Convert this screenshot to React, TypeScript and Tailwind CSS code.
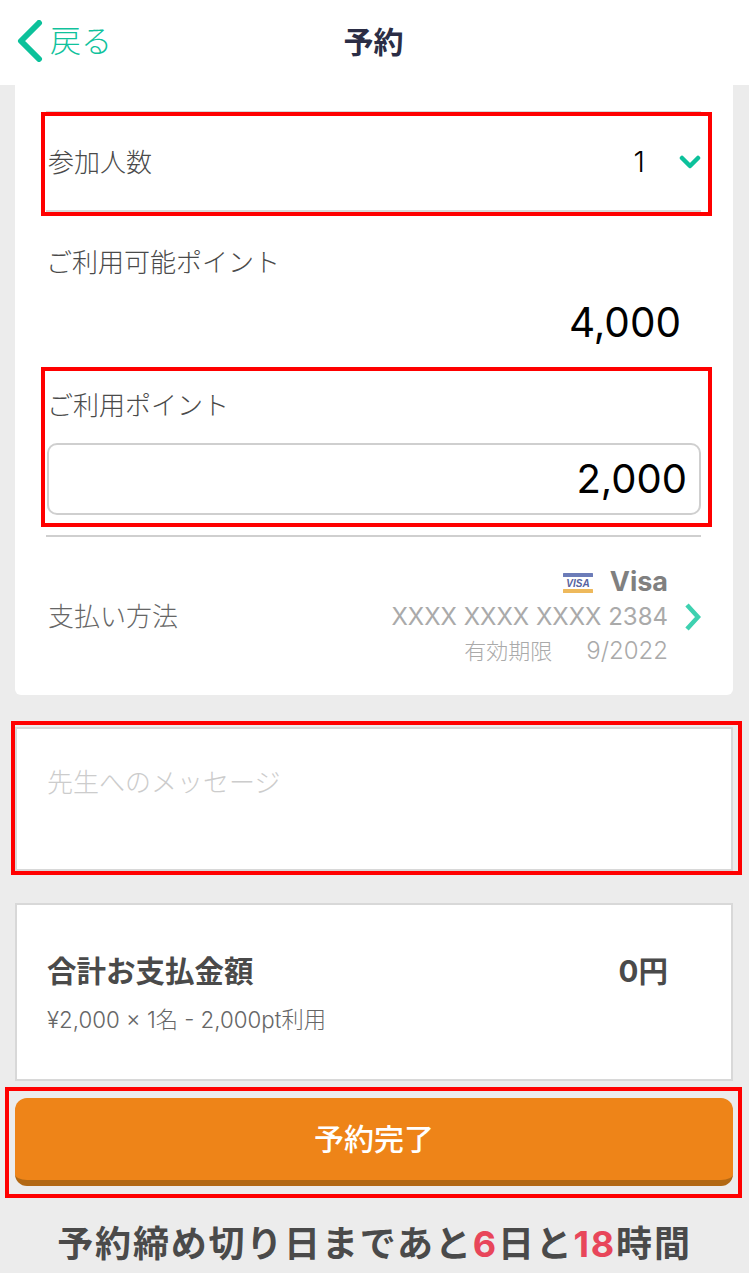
const cjk = "font-['Inter','Noto_Sans_CJK_JP',sans-serif]";

function RedBox({ className }: { className: string }) {
    return <div className={`absolute border-[4px] border-[#ff0000] pointer-events-none ${className}`} />;
}

function VisaMark() {
    return (
        <svg width="30" height="20" viewBox="0 0 30 20" className="mr-[17px]">
            <rect width="30" height="4" rx="0.5" fill="#6c7cb8" />
            <rect y="16" width="30" height="4" rx="0.5" fill="#eeb95c" />
            <text x="15" y="14" textAnchor="middle" fontSize="10" fontWeight="800" fontStyle="italic" fill="#5763a0" fontFamily="Liberation Sans">
                VISA
            </text>
        </svg>
    );
}

export default function App() {
    return (
        <div className={`${cjk} w-[749px] h-[1273px] overflow-hidden bg-[#ececec] text-[#4a4a4a]`}>
            <header className="relative flex items-center justify-center h-[85px] pr-[2px] bg-white">
                <button className="absolute left-[17px] top-[20px] flex items-center text-[#10c29c]">
                    <svg width="26" height="42" viewBox="0 0 26 42" fill="none" stroke="#0cc19b" strokeWidth="6" strokeLinecap="round" strokeLinejoin="round">
                        <path d="M22 3 L4 21 L22 39" />
                    </svg>
                    <span className="ml-[7px] text-[31px] leading-[42px] font-light">戻る</span>
                </button>
                <h1 className="text-[30px] font-bold text-[#2b2d45]">予約</h1>
            </header>

            <section className="ml-[15px] mr-[16px] h-[610px] bg-white rounded-b-md pl-[31px] pr-[32px] pt-[26px]">
                <div className="relative flex items-center justify-between h-[101px] pl-[2px] border-y-2 border-[#d8d8d8]">
                    <span className="pt-[2px] text-[26px] font-light">参加人数</span>
                    <div className="flex items-center">
                        <span className="text-[29px] font-light text-black mr-[34px]">1</span>
                        <svg width="22" height="14" viewBox="0 0 22 14" fill="none" stroke="#0cc19b" strokeWidth="4.5" strokeLinecap="round" strokeLinejoin="round">
                            <path d="M3 3 L11 11 L19 3" />
                        </svg>
                    </div>
                    <RedBox className="-left-[5px] -right-[11px] -top-[1px] -bottom-[6px]" />
                </div>

                <div className="mt-[32px] text-[26px] leading-[38px] font-light">ご利用可能ポイント</div>
                <div className="mt-[17px] pr-[20px] text-right text-[40.5px] leading-[48px] text-black">4,000</div>

                <div className="relative mt-[20px] h-[160px] pt-[20px]">
                    <div className="pl-[1px] text-[26px] leading-[38px] font-light">ご利用ポイント</div>
                    <div className="mt-[18px] flex items-center justify-end h-[72px] pr-[12px] ml-[1px] border-2 border-[#cfcfcf] rounded-[10px] text-[40px] text-black">
                        2,000
                    </div>
                    <RedBox className="-left-[5px] -right-[11px] top-0 bottom-0" />
                </div>

                <div className="mt-[8px] border-t-2 border-[#cfcfcf] flex items-center h-[159px] pt-[2px]">
                    <span className="pl-[2px] text-[26px] font-light text-[#666]">支払い方法</span>
                    <div className="ml-auto flex flex-col items-end mr-[15px] text-[#aaaaaa]">
                        <div className="flex items-center h-[34px]">
                            <VisaMark />
                            <span className="text-[27px] font-bold text-[#808080]">Visa</span>
                        </div>
                        <div className="text-[24px] leading-[34px]">XXXX XXXX XXXX 2384</div>
                        <div className="flex text-[22px] leading-[34px] font-light">
                            <span>有効期限</span>
                            <span className="ml-[34px] text-[24px]">9/2022</span>
                        </div>
                    </div>
                    <svg width="18" height="28" viewBox="0 0 18 28" fill="none" stroke="#3ed1b0" strokeWidth="4.5">
                        <path d="M4 2 L15 14 L4 26" />
                    </svg>
                </div>
            </section>

            <div className="relative mt-[32px] ml-[15px] mr-[16px] h-[144px] border-2 border-[#d8d8d8] bg-white pl-[30px] pt-[35px] text-[26px] leading-[38px] font-light text-[#cccccc]">
                先生へのメッセージ
                <RedBox className="-left-[6px] -right-[11px] -top-[8px] -bottom-[6px]" />
            </div>

            <div className="mt-[32px] ml-[15px] mr-[16px] h-[178px] border-2 border-[#d8d8d8] bg-white pl-[30px] pr-[32px] pt-[44px]">
                <div className="flex justify-between pr-[31px] text-[29.5px] leading-[44px] font-bold">
                    <span>合計お支払金額</span>
                    <span>0円</span>
                </div>
                <div className="mt-[13px] text-[22.3px] leading-[28px] font-light text-[#666]">¥2,000 × 1名 - 2,000pt利用</div>
            </div>

            <div className="relative mt-[17px] ml-[15px] mr-[16px]">
                <button className="flex items-center justify-center w-full h-[88px] rounded-[12px] bg-[#ee8418] border-b-[6px] border-[#b26813] text-[30px] font-medium text-white">
                    予約完了
                </button>
                <RedBox className="-left-[10px] -right-[9px] -top-[11px] -bottom-[12px]" />
            </div>

            <p className="mt-[32px] text-center text-[36px] leading-[52px] font-bold tracking-[1.8px] whitespace-nowrap">
                予約締め切り日まであと<span className="text-[#e8465a]">6</span>日と<span className="text-[#e8465a]">18</span>時間
            </p>
        </div>
    );
}
